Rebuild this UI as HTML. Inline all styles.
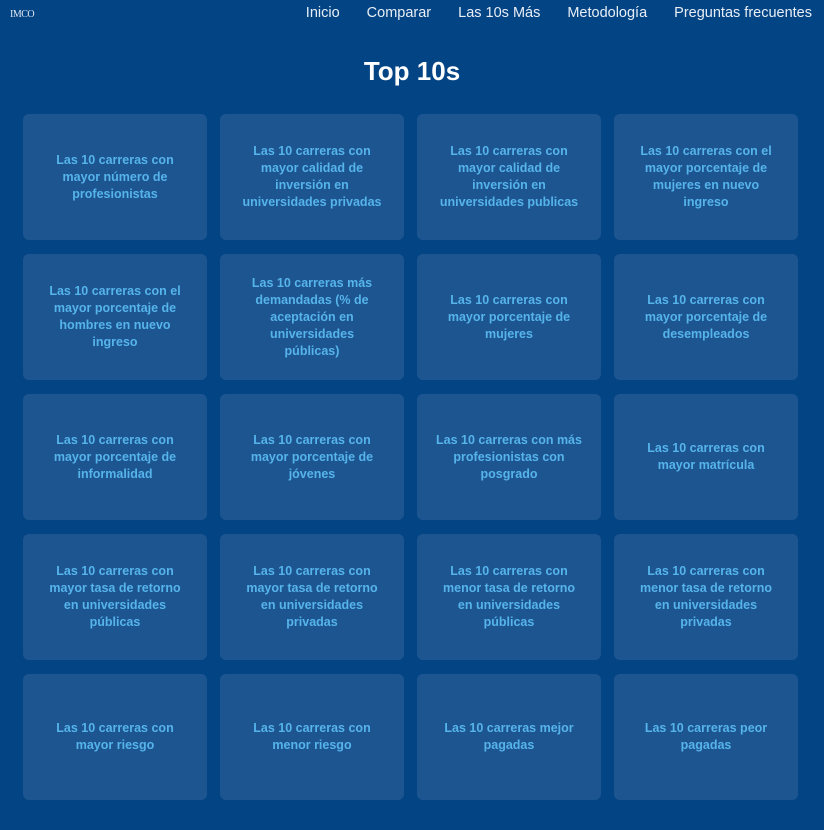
<!DOCTYPE html>
<html><head><meta charset="utf-8"><style>
*{margin:0;padding:0;box-sizing:border-box}
body{width:824px;height:830px;background:#034485;font-family:"Liberation Sans",sans-serif;overflow:hidden;position:relative}
.logo{position:absolute;left:10px;top:9px;color:#dfe8f3;font-family:"Liberation Serif",serif;font-size:10px;letter-spacing:-0.5px}
nav{position:absolute;top:5px;right:12px;display:flex;gap:27px;color:#e8eef6;font-size:14.5px}
h1{position:absolute;top:56px;left:0;width:824px;text-align:center;color:#fff;font-size:26px;font-weight:bold}
.grid{position:absolute;left:23px;top:114px;display:grid;grid-template-columns:repeat(4,184px);grid-auto-rows:126px;column-gap:13px;row-gap:14px}
.c{background:#1d5591;border-radius:6px;display:flex;align-items:center;justify-content:center;text-align:center;color:#56b4eb;font-weight:bold;font-size:12.5px;line-height:17px;padding:0 4px;white-space:nowrap}
</style></head><body>
<div class="logo">IMCO</div>
<nav><span>Inicio</span><span>Comparar</span><span>Las 10s Más</span><span>Metodología</span><span>Preguntas frecuentes</span></nav>
<h1>Top 10s</h1>
<div class="grid">
<div class="c">Las 10 carreras con<br>mayor número de<br>profesionistas</div>
<div class="c">Las 10 carreras con<br>mayor calidad de<br>inversión en<br>universidades privadas</div>
<div class="c">Las 10 carreras con<br>mayor calidad de<br>inversión en<br>universidades publicas</div>
<div class="c">Las 10 carreras con el<br>mayor porcentaje de<br>mujeres en nuevo<br>ingreso</div>
<div class="c">Las 10 carreras con el<br>mayor porcentaje de<br>hombres en nuevo<br>ingreso</div>
<div class="c">Las 10 carreras más<br>demandadas (% de<br>aceptación en<br>universidades<br>públicas)</div>
<div class="c">Las 10 carreras con<br>mayor porcentaje de<br>mujeres</div>
<div class="c">Las 10 carreras con<br>mayor porcentaje de<br>desempleados</div>
<div class="c">Las 10 carreras con<br>mayor porcentaje de<br>informalidad</div>
<div class="c">Las 10 carreras con<br>mayor porcentaje de<br>jóvenes</div>
<div class="c">Las 10 carreras con más<br>profesionistas con<br>posgrado</div>
<div class="c">Las 10 carreras con<br>mayor matrícula</div>
<div class="c">Las 10 carreras con<br>mayor tasa de retorno<br>en universidades<br>públicas</div>
<div class="c">Las 10 carreras con<br>mayor tasa de retorno<br>en universidades<br>privadas</div>
<div class="c">Las 10 carreras con<br>menor tasa de retorno<br>en universidades<br>públicas</div>
<div class="c">Las 10 carreras con<br>menor tasa de retorno<br>en universidades<br>privadas</div>
<div class="c">Las 10 carreras con<br>mayor riesgo</div>
<div class="c">Las 10 carreras con<br>menor riesgo</div>
<div class="c">Las 10 carreras mejor<br>pagadas</div>
<div class="c">Las 10 carreras peor<br>pagadas</div>
</div>
</body></html>
